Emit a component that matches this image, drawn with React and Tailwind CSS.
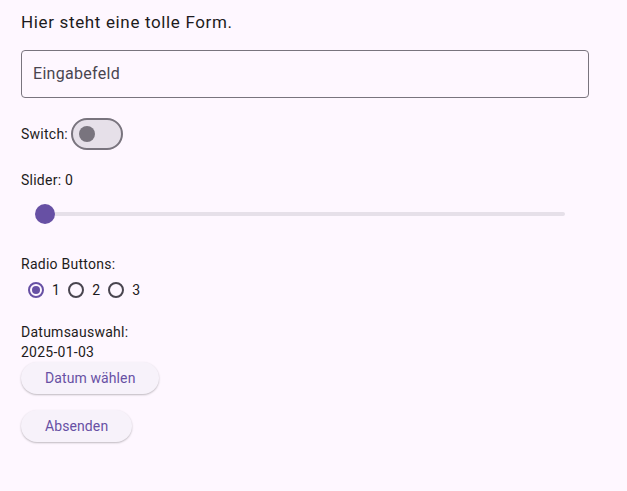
import React, { useState } from 'react';

const Radio = ({ checked, onClick }) => (
  <button
    type="button"
    onClick={onClick}
    className={`w-4 h-4 rounded-full border-2 flex items-center justify-center ${checked ? 'border-[#6750a4]' : 'border-[#49454f]'}`}
  >
    {checked && <span className="w-2 h-2 rounded-full bg-[#6750a4]" />}
  </button>
);

const App = () => {
  const [on, setOn] = useState(false);
  const [radio, setRadio] = useState(1);

  return (
    <div
      className="min-h-screen bg-[#fef7ff] text-[#1d1b20] px-[21px] pt-[10px] text-[14px] leading-[20px] tracking-[0.25px]"
      style={{ fontFamily: 'Roboto, "Liberation Sans", sans-serif' }}
    >
      <h1 className="text-[17px] leading-[24px] tracking-[0.65px]">Hier steht eine tolle Form.</h1>

      <div className="mt-4 w-[568px] h-[48px] border border-[#79747e] rounded-[4px] flex items-center px-[11px]">
        <span className="text-[16px] text-[#49454f] tracking-[0.3px]">Eingabefeld</span>
      </div>

      {/* Switch */}
      <div className="mt-5 flex items-center h-8">
        <span>Switch:</span>
        <button
          type="button"
          onClick={() => setOn(!on)}
          className="ml-[3px] w-[52px] h-8 rounded-full border-2 border-[#79747e] bg-[#e6e0e9] flex items-center px-[6px]"
        >
          <span className="w-4 h-4 rounded-full bg-[#79747e]" />
        </button>
      </div>

      {/* Slider */}
      <div className="mt-5">Slider: 0</div>
      <div className="w-[568px] h-12 px-6 flex items-center">
        <div className="relative w-full h-1 rounded-full bg-[#e6e0e9]">
          <span className="absolute -left-[10px] -top-[8px] w-5 h-5 rounded-full bg-[#6750a4]" />
        </div>
      </div>

      {/* Radios */}
      <div className="mt-4">Radio Buttons:</div>
      <div className="h-8 flex items-center gap-2 pl-[7px]">
        {[1, 2, 3].map((n) => (
          <React.Fragment key={n}>
            <Radio checked={radio === n} onClick={() => setRadio(n)} />
            <span>{n}</span>
          </React.Fragment>
        ))}
      </div>

      {/* Date */}
      <div className="mt-4">Datumsauswahl:</div>
      <div>2025-01-03</div>
      <button
        type="button"
        className="h-8 px-6 rounded-full bg-[#f7f2fa] text-[#6750a4] tracking-[0.1px] shadow-[0_1px_2px_rgba(0,0,0,0.25)]"
      >
        Datum wählen
      </button>

      <div className="mt-4">
        <button
          type="button"
          className="h-8 px-6 rounded-full bg-[#f7f2fa] text-[#6750a4] tracking-[0.1px] shadow-[0_1px_2px_rgba(0,0,0,0.25)]"
        >
          Absenden
        </button>
      </div>
    </div>
  );
};

export default App;
